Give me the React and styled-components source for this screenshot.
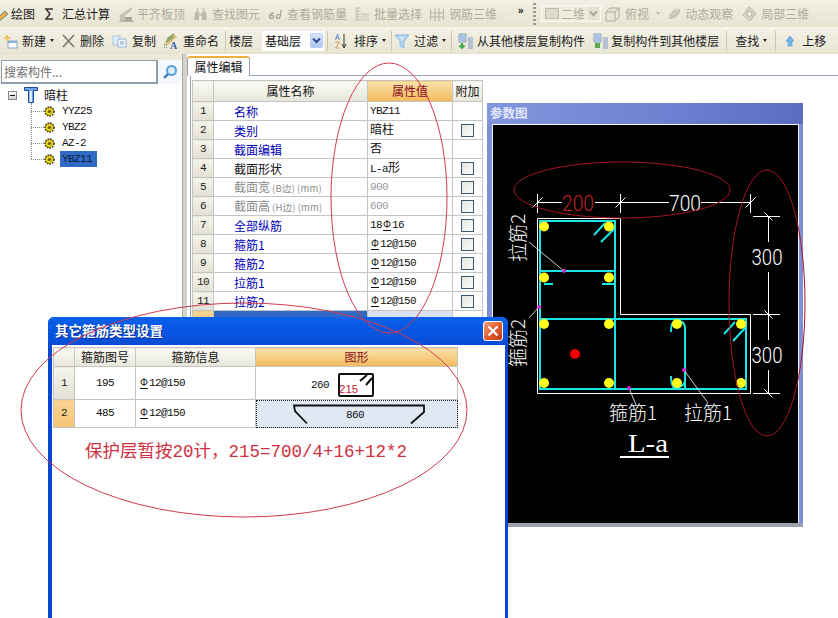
import React from 'react';
import styled, { createGlobalStyle } from 'styled-components';

const Global = createGlobalStyle`
  html, body { margin: 0; padding: 0; background: #fff; overflow: hidden; }
  * { box-sizing: border-box; }
`;

const UI_FONT = `"Noto Sans CJK SC", "Liberation Sans", sans-serif`;
const CODE_FONT = `"Liberation Mono", "Noto Sans CJK SC", monospace`;

const Screen = styled.div`
  position: relative; width: 838px; height: 618px; overflow: hidden;
  display: flex; flex-direction: column; background: #fff;
  font: 12px/1 ${UI_FONT}; color: #111;
`;
const Bar = styled.div`
  display: flex; align-items: center; flex: none; white-space: nowrap;
  height: ${p => p.$h}px; padding-left: ${p => p.$pad || 0}px;
  background: ${p => p.$bg};
  border-bottom: 1px solid ${p => p.$line};
`;
const Tool = styled.div`
  display: flex; align-items: center; flex: none;
  margin-left: ${p => p.$ml || 0}px; gap: ${p => p.$gap ?? 4}px;
  color: ${p => (p.$off ? '#aeac9b' : '#1a1a1a')};
  svg { display: block; flex: none; }
`;
const Caret = styled.span`
  flex: none; width: 0; height: 0; margin-left: ${p => p.$ml || 4}px;
  border-left: 2.5px solid transparent; border-right: 2.5px solid transparent;
  border-top: 3px solid ${p => (p.$off ? '#c0beaf' : '#222')};
`;
const Sep = styled.span`
  flex: none; width: 1px; height: 20px; margin-left: ${p => p.$ml}px; background: #c9c6b0;
`;
const Chevrons = styled.span`
  flex: none; margin-left: ${p => p.$ml}px; width: 8px; font: bold 10px/1 "Liberation Sans", sans-serif; margin-top: -6px;
`;
const Gripper = styled.span`
  flex: none; width: 3px; height: 22px; margin-left: ${p => p.$ml}px;
  background: repeating-linear-gradient(to bottom, #9a9888 0 2px, transparent 2px 4px);
`;
const ViewCombo = styled.div`
  flex: none; display: flex; align-items: center; width: 60px; height: 17px; margin-left: ${p => p.$ml}px;
  background: #efede0; border: 1px solid #faf9f3; color: #aeac9b; padding-left: 3px; gap: 2px;
`;
const ComboArrow = styled.span`
  margin-left: auto; width: 13px; height: 15px; flex: none;
  display: flex; align-items: center; justify-content: center;
  background: ${p => (p.$off ? '#e3e1d2' : 'linear-gradient(#dbe6fb, #aec5f0)')};
  border: 1px solid ${p => (p.$off ? '#eeecdf' : '#b9cdf0')}; border-radius: 2px;
  color: ${p => (p.$off ? '#a9a898' : '#2b4a94')};
  svg { display: block; }
`;
const FloorCombo = styled.div`
  flex: none; display: flex; align-items: center; width: 62px; height: 20px; margin-left: ${p => p.$ml}px;
  background: #fff; padding-left: 3px; padding-right: 1px;
`;

const Main = styled.div`
  flex: 1; display: flex; min-height: 0; background: #fff;
`;
const LeftPanel = styled.div`
  width: 182px; flex: none; display: flex; flex-direction: column; padding-top: 6px;
  background: linear-gradient(#ece9d8 0 6px, #fff 6px);
`;
const SearchRow = styled.div`
  display: flex; align-items: center; height: 24px; flex: none; padding-left: 1px; background: #f6f5ee;
`;
const SearchBox = styled.div`
  width: 157px; height: 24px; border: 1px solid #8f9eae; border-width: 1px 2px 2px 1px;
  background: #fff; color: #6f6f6f; display: flex; align-items: center; padding-left: 2px;
  font-size: 12px;
`;
const SearchButton = styled.div`
  flex: 1; display: flex; justify-content: center; align-items: center; background: #f4f8fd; height: 24px;
`;
const Tree = styled.div`
  padding: 3px 0 0 8px; display: flex; flex-direction: column;
`;
const TreeRoot = styled.div`
  display: flex; align-items: center; height: 16px;
  svg { display: block; flex: none; }
`;
const MinusBox = styled.span`
  width: 9px; height: 9px; flex: none; position: relative;
  border: 1px solid #7f8a96; background: linear-gradient(#fff, #d8d8cc);
  &::after { content: ""; position: absolute; left: 1px; right: 1px; top: 3px; height: 1px; background: #111; }
`;
const Gutter = styled.span` width: 7px; flex: none; `;
const RootLabel = styled.span` margin-left: 6px; font-size: 12px; `;
const TreeKids = styled.ul`
  list-style: none; margin: 0; padding: 0 0 0 23px; position: relative;
  &::before {
    content: ""; position: absolute; left: 23px; top: 0; bottom: 8px;
    border-left: 1px dotted #8a8a8a;
  }
`;
const TreeKid = styled.li`
  display: flex; align-items: center; height: 16px; position: relative; padding-left: 13px; gap: 7px;
  &::before {
    content: ""; position: absolute; left: 0; width: 13px; top: 8px; border-top: 1px dotted #8a8a8a;
  }
  svg { display: block; flex: none; }
`;
const CodeLabel = styled.span`
  font: 11px/16px ${CODE_FONT}; letter-spacing: -0.6px; height: 16px; padding: 0 2px; margin-left: -2px;
  ${p => p.$sel && 'background: #316ac5; color: #0a1a3a; width: 37px;'}
`;
const Splitter = styled.div`
  width: 5px; flex: none; background: #d6d4c8; border-left: 1px solid #a8a8a0;
`;
const Content = styled.div`
  flex: 1; min-width: 0; display: flex; flex-direction: column;
`;
const TabStrip = styled.div`
  height: 22px; flex: none; display: flex; align-items: flex-end; border-bottom: 1px solid #93a3b3; padding-top: 2px;
`;
const Tab = styled.div`
  width: 63px; height: 20px; background: #fff; display: flex; align-items: center; justify-content: center;
  border: 1px solid #93a3b3; border-top: 2px solid #f0b040; border-bottom: 0; border-radius: 3px 3px 0 0;
  margin-bottom: -1px; position: relative;
`;
const GridWrap = styled.div`
  flex: 1; margin-left: 3px; padding: 4px 0 0 1px; border-left: 1px solid #93a3b3;
`;
const Grid = styled.table`
  border-collapse: collapse; table-layout: fixed; width: ${p => p.$w}px;
  td, th { border: 1px solid #c4c4c0; padding: 0; font-weight: 400; overflow: hidden; white-space: nowrap; }
`;
const HeadCell = styled.th`
  height: ${p => p.$h || 21}px; text-align: center;
  color: ${p => (p.$active ? '#8a0c1c' : '#111')};
  background: ${p => (p.$active ? 'linear-gradient(#fae2ab, #f2b95c)' : 'linear-gradient(#fbfbf6, #e8e6da)')};
`;
const NumCell = styled.td`
  text-align: center; color: #222; font: 11px/1 ${CODE_FONT}; letter-spacing: -0.6px;
  background: ${p => (p.$active ? 'linear-gradient(#fad596, #f6c474)' : 'linear-gradient(#f6f5ec, #e2e0d3)')};
`;
const GridRow = styled.tr` height: ${p => p.$h || 19}px; `;
const NameCell = styled.td`
  padding: 1px 0 0 20px !important;
  color: ${p => ({ link: '#0000b8', mute: '#8c8c8c', plain: '#111' }[p.$tone])};
  background: ${p => (p.$sel ? '#316ac5' : '#fff')};
`;
const Paren = styled.span` font-size: 9.5px; margin-left: 2px; letter-spacing: .2px; `;
const ValueCell = styled.td`
  padding: 0 0 0 2px !important; font-family: ${CODE_FONT}; font-size: 11px; letter-spacing: -0.6px;
  color: ${p => (p.$mute ? '#999' : '#111')};
  background: ${p => (p.$sel ? '#d9e2f2' : '#fff')};
`;
const CjkValue = styled.span` font-family: ${UI_FONT}; font-size: 12px; letter-spacing: 0; `;
const AttachCell = styled.td` text-align: center; background: #fff; `;
const Check = styled.span`
  display: block; width: 13px; height: 13px; margin: 1px auto 0;
  border: 1px solid #3d5a75; background: linear-gradient(135deg, #e6e6e0, #fbfbf8);
`;
const Rebar = styled.span`
  display: inline-block; font-family: "Liberation Sans", sans-serif; font-size: 10px; line-height: 10px;
  border-bottom: 1px solid currentColor; margin: 0 1px; letter-spacing: 0;
`;

const ParamWindow = styled.section`
  position: absolute; left: 487px; top: 103px; width: 316px; height: 424px;
  display: flex; flex-direction: column;
  padding: 0 4px 4px 5px;
  background: #7f8fd6; border-bottom: 4px solid #9ea2ae;
`;
const ParamTitle = styled.header`
  height: 21px; flex: none; display: flex; align-items: center;
  margin: 0 -4px 0 -5px; padding-left: 3px;
  background: linear-gradient(90deg, #8296de, #6b80d0 60%, #5a6cc0);
  color: #e4e8fb; font-weight: 700; font-size: 12.5px;
`;
const Canvas = styled.div`
  flex: 1; background: #000; border: 1px solid #f4f4f4; border-bottom: 0;
  svg { display: block; }
`;

const Dialog = styled.section`
  position: absolute; left: 48px; top: 317px; width: 460px; height: 320px;
  display: flex; flex-direction: column;
  background: #0a46d4; border-radius: 6px 6px 0 0; padding: 0 3px 0 4px;
`;
const DialogTitle = styled.header`
  height: 28px; flex: none; display: flex; align-items: center; justify-content: space-between;
  margin: 0 -3px 0 -4px; padding: 0 5px 0 7px; border-radius: 6px 6px 0 0;
  background: linear-gradient(#0a62e8, #0558e4 40%, #0a4cd4);
  color: #fff; font-weight: 700; font-size: 13.5px; text-shadow: 1px 1px 0 #0a2e90;
`;
const CloseBtn = styled.div`
  width: 20px; height: 20px; border: 1px solid #fff; border-radius: 3px;
  display: flex; align-items: center; justify-content: center;
  background: linear-gradient(135deg, #f0a080, #e05a2c 55%, #c03a14);
  svg { display: block; }
`;
const DialogBody = styled.div`
  flex: 1; background: #fff; padding: 2px 0 0 1px;
`;
const ShapeCell = styled.td`
  background: ${p => (p.$sel ? '#e0e8f4' : '#fff')};
  outline: ${p => (p.$sel ? '1px dotted #222' : 'none')}; outline-offset: -1px;
  svg { display: block; }
`;
const CenterCell = styled.td`
  text-align: center; font: 11px/1 ${CODE_FONT}; letter-spacing: -0.6px;
`;
const InfoCell = styled.td`
  padding-left: 3px !important; font: 11px/1 ${CODE_FONT}; letter-spacing: -0.6px;
`;
const Note = styled.p`
  margin: 14px 0 0 32px; color: #cf3040; font: 17.5px/1.2 ${CODE_FONT}; white-space: nowrap;
`;
const Annotations = styled.svg`
  position: absolute; left: 0; top: 0; pointer-events: none;
`;

/* ---------- icons ---------- */
const S = ({ w, h = 16, children }) => (
  <svg width={w} height={h} viewBox={`0 0 ${w} ${h}`}>{children}</svg>
);
const Pencil = () => (
  <S w={9}><path d="M-6 15 L5 5 L8 8 L-2 16Z" fill="#e8b040" stroke="#4668a8" strokeWidth=".8" /></S>
);
const Sigma = () => (
  <S w={9}><path d="M8 3H1l4 5-4 5h7" fill="none" stroke="#333" strokeWidth="1.5" /></S>
);
const AlignIcon = () => (
  <S w={17}><path d="M2 15 L2 9 L9 4 L15 1 L12 6 L7 9 V15Z" fill="#c4c2b2" /><rect x="7" y="11" width="7" height="4" fill="#a9a797" /><path d="M1 15.5H16" stroke="#b5b3a4" /></S>
);
const Binoculars = () => (
  <S w={15}><path d="M1 14 L2 6 H6 V14Z M9 14 V6 H13 L14 14Z" fill="#bdbbaa" /><rect x="3" y="2" width="3" height="4" fill="#d2d0c0" /><rect x="9" y="2" width="3" height="4" fill="#d2d0c0" /><rect x="6" y="7" width="3" height="3" fill="#cfcdbc" /></S>
);
const Glasses = () => (
  <S w={14}><path d="M6 7 C3 7 1 9 1.5 11 C2 13 5 13 5.5 11 C6 9.5 4 8.5 2 10" fill="none" stroke="#aba999" strokeWidth="1.4" /><path d="M13 4 C13 8 13 11 11 12 C9 13 7.5 11 8.5 9.5 C9.5 8 11.5 8.5 13 10" fill="none" stroke="#aba999" strokeWidth="1.4" /></S>
);
const BatchIcon = () => (
  <S w={16}><path d="M1 2H7M1 5H7M1 8H15M1 11H15M1 14H15M3 2V14M10 8V14" fill="none" stroke="#c0beae" /><rect x="8" y="9" width="7" height="5" fill="#dbd9c8" /></S>
);
const Rebar3d = () => (
  <S w={16}><path d="M1.5 3V14 M6 2V15 M10 2V15 M14.5 3V14 M1 7H15 M1 11H15" fill="none" stroke="#b5b3a3" strokeWidth="1" /></S>
);
const Cube = () => (
  <S w={15}><path d="M1 6 L5 2H14V11L10 15H1Z" fill="#e8e6d6" stroke="#aeac9d" /><path d="M1 6H10V15 M10 6 L14 2" fill="none" stroke="#aeac9d" /></S>
);
const Orbit = () => (
  <S w={17}><path d="M3 13 C5 6 10 2 15 3 C16 8 10 14 3 13Z" fill="#c5c3b0" /><path d="M1 15 L16 1" stroke="#e4e2d2" /></S>
);
const Local3d = () => (
  <S w={15}><path d="M7 1 L14 7 L8 15 L1 9Z" fill="#d5d3c2" stroke="#bcbaaa" /><circle cx="7.5" cy="8" r="2.5" fill="#efeee2" stroke="#b5b3a4" /></S>
);
const NewIcon = () => (
  <S w={16}><rect x="6" y="8" width="9" height="7" fill="#fff" stroke="#8fa9c6" /><rect x="6" y="8" width="9" height="2" fill="#8ab0dc" /><path d="M5 2v6M2 5h6" stroke="#ecc65a" strokeWidth="2" /></S>
);
const XIcon = () => (
  <S w={15}><path d="M2 2 L13 14 M13 2 L2 14" stroke="#73736c" strokeWidth="1.5" /></S>
);
const CopyIcon = () => (
  <S w={15}><path d="M1 3H8V12H1Z" fill="#e3edf9" stroke="#a9c0dc" /><path d="M6 6H14V14H6Z" fill="#f6f9fd" stroke="#8fb0d4" /><path d="M8 9H12M8 11H12" stroke="#7a9ac8" /></S>
);
const RenameIcon = () => (
  <S w={16}>
    <path d="M1 14 L4 6 L11 1 L14 4 L7 10Z" fill="#d9c07a" />
    <path d="M4 6 L11 1 M3 9 L10 4" stroke="#6a9a5a" strokeWidth="1.2" />
    <path d="M1 12 H5 M1 14.5 H5" stroke="#8a8a80" strokeDasharray="1 1" />
    <text x="7" y="15.5" fontFamily="Liberation Serif" fontWeight="700" fontSize="10" fill="#3a62b0">A</text>
  </S>
);
const SortIcon = () => (
  <S w={16}>
    <path d="M2.5 7 L4.5 1 L6.5 7 M3.3 5H5.7" fill="none" stroke="#6a8ccc" />
    <path d="M2.5 9H6.5L2.5 15H6.5" fill="none" stroke="#d09a60" />
    <path d="M11 1V14 M9 11 L11 15 L13 11" fill="none" stroke="#333" />
  </S>
);
const FilterIcon = () => (
  <S w={16}><path d="M1 2H15L10 8V15L6 13V8Z" fill="#b4d6f2" stroke="#8ab8de" /><path d="M6 4H10L8.5 7H7.5Z" fill="#e6f3fc" /></S>
);
const StackBars = () => (
  <>
    <path d="M11 5H16M11 7H16M11 9H16M11 11H16M11 13H16M11 15H16" stroke="#7a9ac8" />
    <path d="M2 1H9V9H2Z" fill="#dce8f8" stroke="#7f9db9" />
    <path d="M3 3H8M3 5H8M3 7H8" stroke="#7a9ac8" />
  </>
);
const CopyFrom = () => (
  <S w={17}><StackBars /><path d="M5 10V15M2.5 12.5L5 15L7.5 12.5" fill="none" stroke="#4aa848" strokeWidth="2" /></S>
);
const CopyTo = () => (
  <S w={17}><StackBars /><path d="M3 10H8V15H3Z" fill="#5aa850" /></S>
);
const UpIcon = () => (
  <S w={10}><path d="M5 3 L9 8H7V13H3V8H1Z" fill="#74b4ec" stroke="#4a90d0" strokeWidth=".6" /></S>
);
const ArrowDown = () => (
  <svg width="9" height="7" viewBox="0 0 9 7"><path d="M1 1.5 L4.5 5 L8 1.5" fill="none" stroke="currentColor" strokeWidth="2" /></svg>
);
const Lens = () => (
  <svg width="16" height="16" viewBox="0 0 16 16"><circle cx="9.5" cy="6.5" r="4.5" fill="#d8ecfa" stroke="#5aa0d8" strokeWidth="2" /><path d="M6 10 L2 14" stroke="#2f7cc0" strokeWidth="2.4" /></svg>
);
const Column = () => (
  <svg width="14" height="16" viewBox="0 0 14 16"><path d="M0.5 0.5H13.5V3.5H9.5V15.5H4.5V3.5H0.5Z" fill="#6ea4e4" stroke="#1a4a9a" /><path d="M5.5 4H8V15H5.5Z" fill="#dcecff" /></svg>
);
const Gear = () => (
  <svg width="11" height="11" viewBox="0 0 11 11"><circle cx="5.5" cy="5.5" r="4.4" fill="#e8d020" stroke="#3a3410" strokeWidth="1.6" strokeDasharray="1.6 1" /><circle cx="5.5" cy="5.5" r="1.6" fill="#6a5a10" /></svg>
);
const CloseX = () => (
  <svg width="12" height="12" viewBox="0 0 12 12"><path d="M1.5 1.5 L10.5 10.5 M10.5 1.5 L1.5 10.5" stroke="#fff" strokeWidth="2.2" /></svg>
);
const BarA = () => (
  <svg width="202" height="32" viewBox="0 0 202 32">
    <text x="55" y="21" fontFamily="Liberation Mono" fontSize="11" letterSpacing="-.6" fill="#111">260</text>
    <rect x="83" y="7" width="34" height="22" rx="1" fill="none" stroke="#111" strokeWidth="2" />
    <path d="M104 14 L111 8 M110 18 L116 11" stroke="#111" strokeWidth="2" />
    <text x="83" y="25.5" fontFamily="Liberation Sans" fontSize="11.5" fill="#c81c30">215</text>
  </svg>
);
const BarB = () => (
  <svg width="201" height="27" viewBox="0 0 201 27">
    <path d="M51 23.5 L39 11 L38 5.5 H168 V12 L155 23.5" fill="none" stroke="#111" strokeWidth="1.8" />
    <text x="99" y="18" textAnchor="middle" fontFamily="Liberation Mono" fontSize="11" letterSpacing="-.6" fill="#111">860</text>
  </svg>
);

const Tick = ({ x, y }) => <path d={`M${x - 5} ${y + 5} L${x + 5} ${y - 5}`} stroke="#fff" />;
const Tick2 = ({ x, y }) => <path d={`M${x - 4} ${y - 4} L${x + 4} ${y + 4}`} stroke="#fff" />;
const Drawing = () => {
  const dots = [[544,226.5],[609,226.5],[544,277.5],[609,277.5],[544,324],[609,324],[677,324],[741,324],[544,383],[609,383],[677,383],[741,383]];
  const pins = [[564,271],[539,307],[629,388],[684,370]];
  return (
    <svg width="305" height="398" viewBox="493 125 305 398">
      <path d="M537.5 218.5H620.5V314.5H750.5V393.5H537.5Z" fill="none" stroke="#fff" />
      <g fill="none" stroke="#19e6e6" strokeWidth="2">
        <path d="M540 221H615V389H540Z" />
        <path d="M540 319H746V389H615" />
        <path d="M540 271H615" />
        <path d="M685 389V328C685 321 678 320 675 321 C671 322 671 328 671 332" />
        <path d="M685 380C685 386 678 388 675 388 C671 387 671 380 671 376" />
        <path d="M594 235L605 223M601 242L615 228" />
        <path d="M724 334L735 322M733 341L746 327" />
        <path d="M544 284H553M602 284H615" />
      </g>
      <g stroke="#fff" fill="none">
        <path d="M537.5 194V213M620.5 194V213M750.5 194V213" />
        <path d="M537 202.5H562M595 202.5H669M701 202.5H751" />
        <path d="M768.5 216V242M768.5 272V340M768.5 370V393" />
        <path d="M753 216.5H780M753 314.5H780M753 393.5H780" />
        <path d="M529 242L564 271M529 318L539 307M629 388L636 405M684 370L708 403" strokeWidth=".8" />
      </g>
      <Tick x={537.5} y={202.5} /><Tick x={620.5} y={202.5} /><Tick x={750.5} y={202.5} />
      <Tick2 x={768.5} y={216.5} /><Tick2 x={768.5} y={314.5} /><Tick2 x={768.5} y={393.5} />
      {dots.map(([x, y], i) => <circle key={i} cx={x} cy={y} r="5" fill="#ffff1a" />)}
      <circle cx="575" cy="354" r="5" fill="#f00000" />
      {pins.map(([x, y], i) => <circle key={i} cx={x} cy={y} r="2" fill="#e020d8" />)}
      <g fontFamily="Roboto, sans-serif" fontWeight="300" fontSize="22" fill="#fff" textAnchor="middle">
        <text x="578" y="210.5" fill="#c02028" textLength="32" lengthAdjust="spacingAndGlyphs">200</text>
        <text x="685" y="210.5" textLength="32" lengthAdjust="spacingAndGlyphs">700</text>
        <text x="767" y="265" textLength="31" lengthAdjust="spacingAndGlyphs">300</text>
        <text x="767" y="363" textLength="31" lengthAdjust="spacingAndGlyphs">300</text>
      </g>
      <g fontFamily="Noto Sans CJK SC, sans-serif" fontSize="19" fontWeight="300" fill="#fff" textAnchor="middle">
        <text transform="translate(525 238) rotate(-90)">拉筋2</text>
        <text transform="translate(525 343) rotate(-90)">箍筋2</text>
        <text x="633" y="420">箍筋1</text>
        <text x="708" y="420">拉筋1</text>
      </g>
      <text x="648" y="452" textAnchor="middle" fontFamily="Liberation Serif, serif" fontSize="25" fill="#fff" textLength="40" lengthAdjust="spacingAndGlyphs">L-a</text>
      <path d="M620 457H669" stroke="#fff" strokeWidth="2" />
    </svg>
  );
};

const props = [
  ['名称', 'link', 'YBZ11', false, false],
  ['类别', 'link', <CjkValue>暗柱</CjkValue>, false, true],
  ['截面编辑', 'link', <CjkValue>否</CjkValue>, false, false],
  ['截面形状', 'plain', <>L-a<CjkValue>形</CjkValue></>, false, true],
  [<>截面宽<Paren>(B边)</Paren><Paren>(mm)</Paren></>, 'mute', '900', true, true],
  [<>截面高<Paren>(H边)</Paren><Paren>(mm)</Paren></>, 'mute', '600', true, true],
  ['全部纵筋', 'link', <>18<Rebar>Φ</Rebar>16</>, false, true],
  ['箍筋1', 'link', <><Rebar>Φ</Rebar>12@150</>, false, true],
  ['箍筋2', 'link', <><Rebar>Φ</Rebar>12@150</>, false, true],
  ['拉筋1', 'link', <><Rebar>Φ</Rebar>12@150</>, false, true],
  ['拉筋2', 'link', <><Rebar>Φ</Rebar>12@150</>, false, true],
];

export default function App() {
  return (
    <Screen>
      <Global />
      <Bar $h={28} $bg="linear-gradient(#f2f0e4, #e6e3d1)" $line="#f7f6ee">
        <Tool $gap={2}><Pencil />绘图</Tool>
        <Tool $ml={10} $gap={8}><Sigma />汇总计算</Tool>
        <Tool $off $ml={8} $gap={2}><AlignIcon />平齐板顶</Tool>
        <Tool $off $ml={8} $gap={4}><Binoculars />查找图元</Tool>
        <Tool $off $ml={8} $gap={5}><Glasses />查看钢筋量</Tool>
        <Tool $off $ml={7} $gap={4}><BatchIcon />批量选择</Tool>
        <Tool $off $ml={7} $gap={4}><Rebar3d />钢筋三维</Tool>
        <Chevrons $ml={21}>»</Chevrons>
        <Gripper $ml={7} />
        <ViewCombo $ml={5}>
          <svg width="14" height="11" viewBox="0 0 14 11"><rect x=".5" y=".5" width="13" height="10" fill="#dddbca" stroke="#c0beaf" /></svg>
          二维
          <ComboArrow $off><ArrowDown /></ComboArrow>
        </ViewCombo>
        <Tool $off $ml={4} $gap={5}><Cube />俯视</Tool>
        <Caret $off $ml={7} />
        <Tool $off $ml={5} $gap={3}><Orbit />动态观察</Tool>
        <Tool $off $ml={9} $gap={4}><Local3d />局部三维</Tool>
      </Bar>
      <Bar $h={26} $pad={2} $bg="linear-gradient(#f3f1e6, #e8e5d4)" $line="#e4e1cf">
        <Tool><NewIcon />新建</Tool><Caret />
        <Tool $ml={7}><XIcon />删除</Tool>
        <Tool $ml={8} $gap={5}><CopyIcon />复制</Tool>
        <Tool $ml={7}><RenameIcon />重命名</Tool>
        <Sep $ml={6} />
        <Tool $ml={3}>楼层</Tool>
        <FloorCombo $ml={9}>基础层<ComboArrow><ArrowDown /></ComboArrow></FloorCombo>
        <Sep $ml={3} />
        <Tool $ml={5} $gap={5}><SortIcon />排序</Tool><Caret />
        <Sep $ml={5} />
        <Tool $ml={2}><FilterIcon />过滤</Tool><Caret />
        <Sep $ml={5} />
        <Tool $ml={5} $gap={3}><CopyFrom />从其他楼层复制构件</Tool>
        <Tool $ml={7} $gap={2}><CopyTo />复制构件到其他楼层</Tool>
        <Sep $ml={7} />
        <Tool $ml={8}>查找</Tool><Caret />
        <Sep $ml={8} />
        <Tool $ml={9} $gap={7}><UpIcon />上移</Tool>
      </Bar>
      <Main>
        <LeftPanel>
          <SearchRow>
            <SearchBox>搜索构件...</SearchBox>
            <SearchButton><Lens /></SearchButton>
          </SearchRow>
          <Tree>
            <TreeRoot><MinusBox /><Gutter /><Column /><RootLabel>暗柱</RootLabel></TreeRoot>
            <TreeKids>
              {['YYZ25', 'YBZ2', 'AZ-2', 'YBZ11'].map((n, i) => (
                <TreeKid key={n}><Gear /><CodeLabel $sel={i === 3}>{n}</CodeLabel></TreeKid>
              ))}
            </TreeKids>
          </Tree>
        </LeftPanel>
        <Splitter />
        <Content>
          <TabStrip><Tab>属性编辑</Tab></TabStrip>
          <GridWrap>
            <Grid $w={290}>
              <colgroup><col width="21" /><col width="154" /><col width="85" /><col width="30" /></colgroup>
              <thead>
                <tr>
                  <HeadCell />
                  <HeadCell>属性名称</HeadCell>
                  <HeadCell $active>属性值</HeadCell>
                  <HeadCell>附加</HeadCell>
                </tr>
              </thead>
              <tbody>
                {props.map(([name, tone, value, mute, chk], i) => (
                  <GridRow key={i}>
                    <NumCell>{i + 1}</NumCell>
                    <NameCell $tone={tone}>{name}</NameCell>
                    <ValueCell $mute={mute}>{value}</ValueCell>
                    <AttachCell>{chk && <Check />}</AttachCell>
                  </GridRow>
                ))}
                <GridRow>
                  <NumCell $active />
                  <NameCell $tone="plain" $sel />
                  <ValueCell $sel />
                  <AttachCell />
                </GridRow>
              </tbody>
            </Grid>
          </GridWrap>
        </Content>
      </Main>

      <ParamWindow>
        <ParamTitle>参数图</ParamTitle>
        <Canvas><Drawing /></Canvas>
      </ParamWindow>

      <Dialog>
        <DialogTitle>其它箍筋类型设置<CloseBtn><CloseX /></CloseBtn></DialogTitle>
        <DialogBody>
          <Grid $w={404}>
            <colgroup><col width="21" /><col width="61" /><col width="120" /><col width="202" /></colgroup>
            <thead>
              <tr>
                <HeadCell $h={19} />
                <HeadCell $h={19}>箍筋图号</HeadCell>
                <HeadCell $h={19}>箍筋信息</HeadCell>
                <HeadCell $h={19} $active>图形</HeadCell>
              </tr>
            </thead>
            <tbody>
              <GridRow $h={33}>
                <NumCell>1</NumCell>
                <CenterCell>195</CenterCell>
                <InfoCell><Rebar>Φ</Rebar>12@150</InfoCell>
                <ShapeCell><BarA /></ShapeCell>
              </GridRow>
              <GridRow $h={28}>
                <NumCell $active>2</NumCell>
                <CenterCell>485</CenterCell>
                <InfoCell><Rebar>Φ</Rebar>12@150</InfoCell>
                <ShapeCell $sel><BarB /></ShapeCell>
              </GridRow>
            </tbody>
          </Grid>
          <Note>保护层暂按20计，215=700/4+16+12*2</Note>
        </DialogBody>
      </Dialog>

      <Annotations width="838" height="618" viewBox="0 0 838 618">
        <g fill="none" strokeWidth="1">
          <ellipse cx="389" cy="198" rx="58" ry="135" stroke="#d23a52" />
          <ellipse cx="244" cy="410" rx="223" ry="107" stroke="#d23a52" />
          <ellipse cx="622" cy="190" rx="108" ry="28" stroke="#a81424" />
          <ellipse cx="767" cy="303" rx="38" ry="133" stroke="#a81424" />
        </g>
      </Annotations>
    </Screen>
  );
}
